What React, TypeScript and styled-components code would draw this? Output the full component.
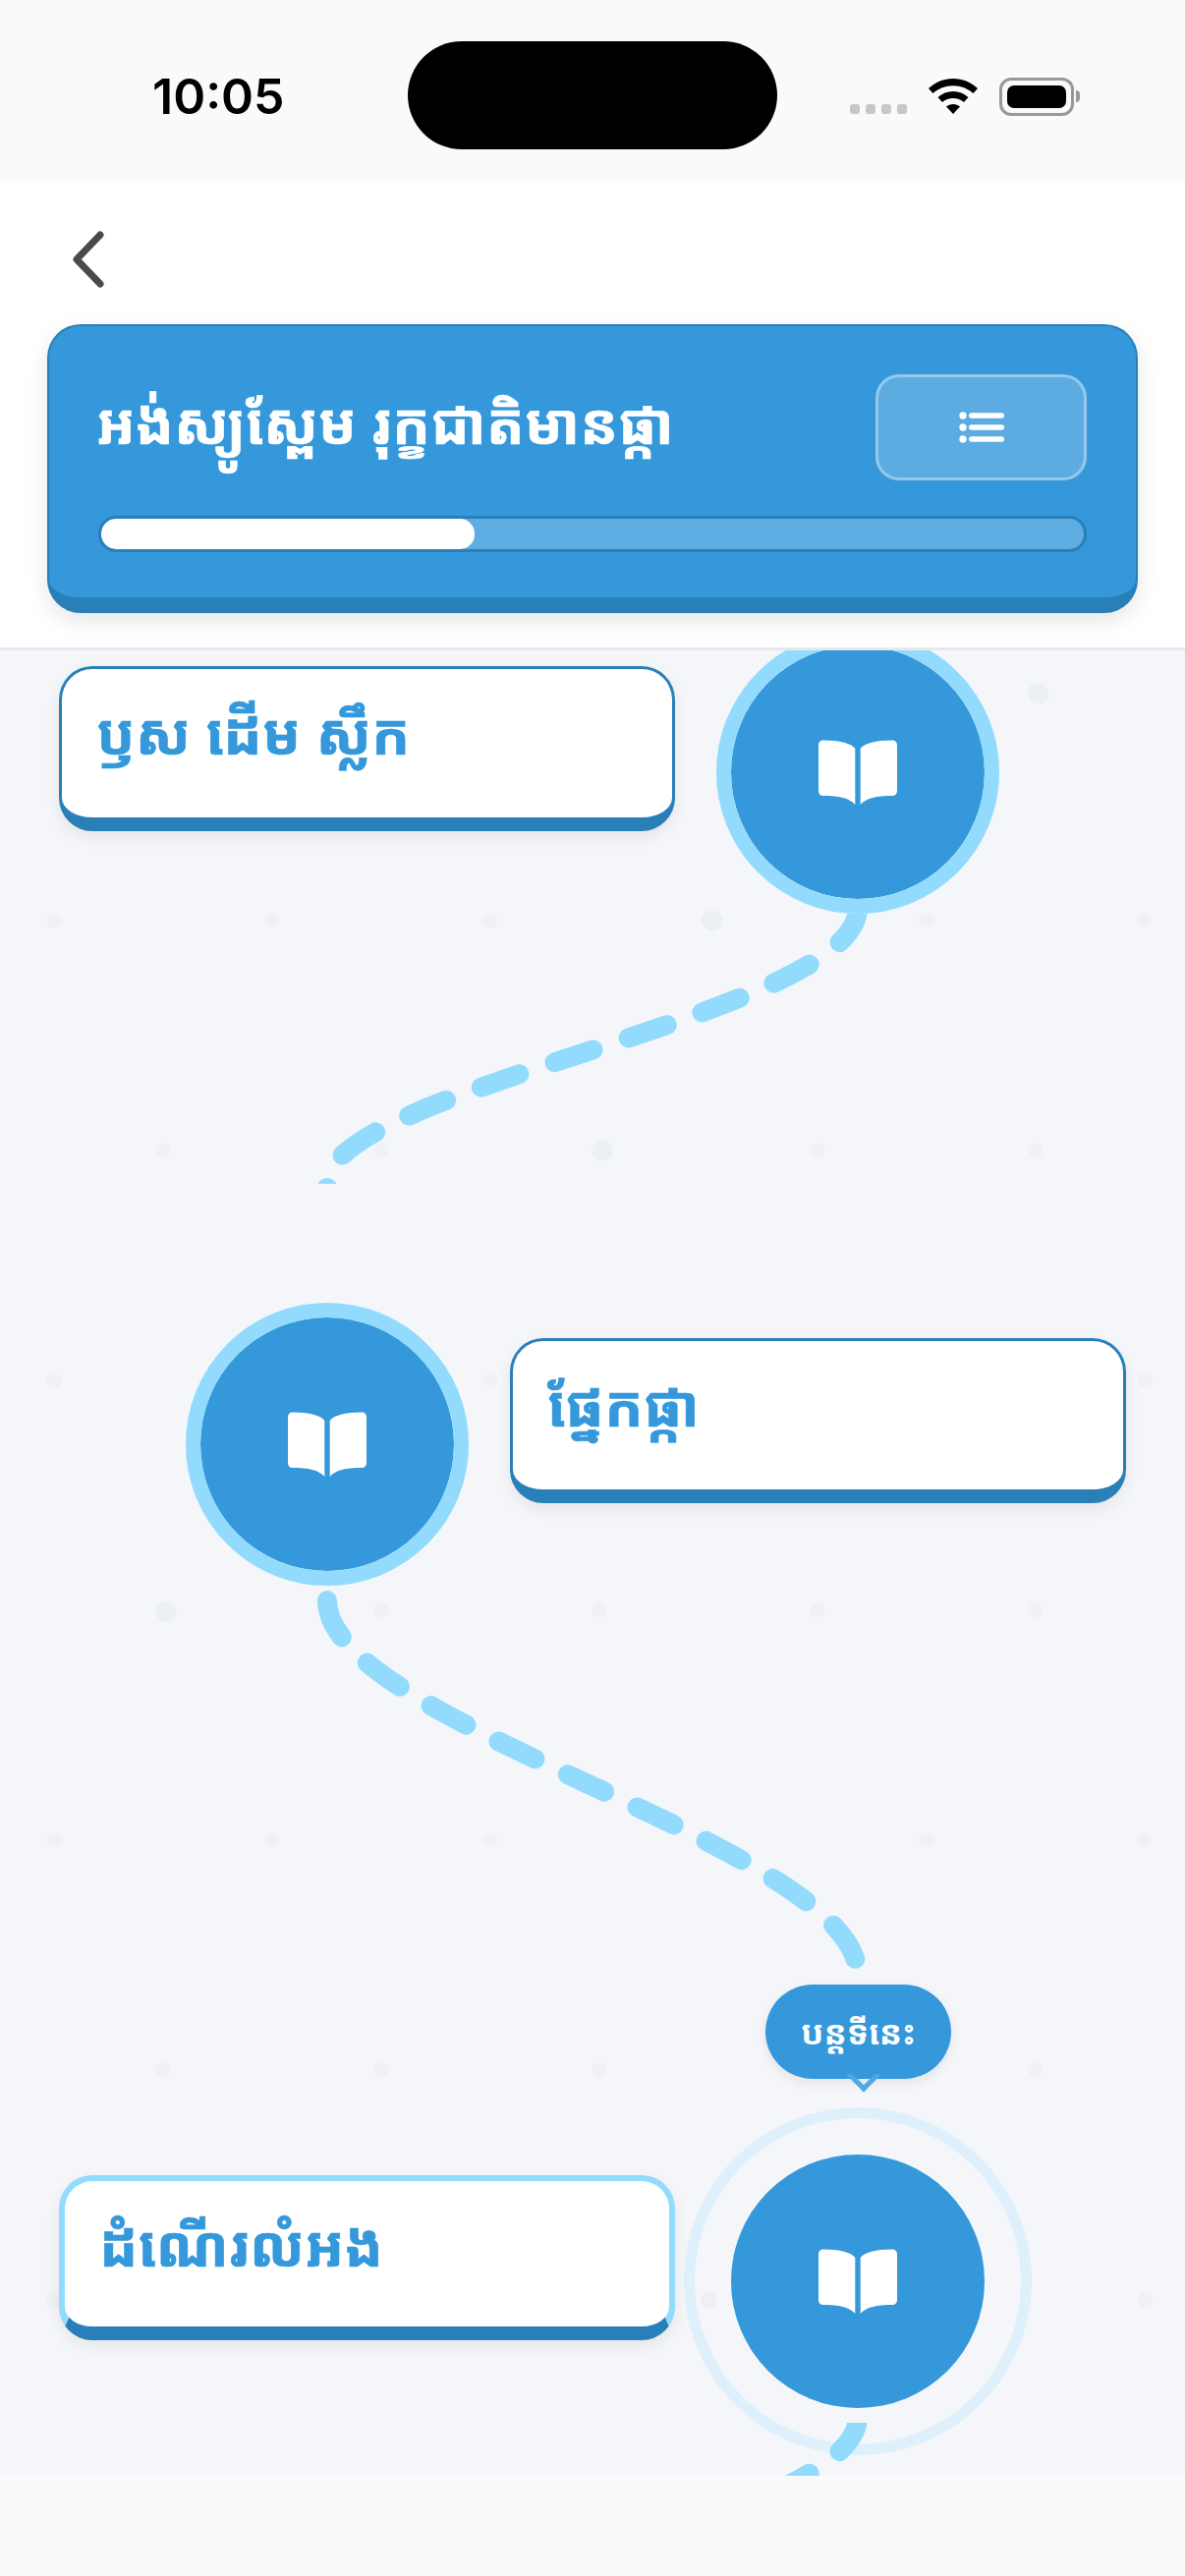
import React from "react";
import styled, { createGlobalStyle } from "styled-components";

const KHMER = `"Noto Sans Khmer", "Khmer OS", "Noto Sans", "DejaVu Sans", sans-serif`;

const GlobalStyle = createGlobalStyle`
  html, body { margin: 0; padding: 0; background: #f9fafc; }
  * { box-sizing: border-box; }
`;

const lessons = [
  { title: "ឫស ដើម ស្លឹក", side: "right" as const },
  { title: "ផ្នែកផ្កា", side: "left" as const },
  { title: "ដំណើរលំអង", side: "right" as const, current: true },
];

const BookIcon = () => (
  <svg width="80" height="66" viewBox="0 0 80 66" fill="#fff">
    <path d="M37.300 9C33 3.500 22 .5 5 .5 2 .5 0 2.500 0 5.500V52c0 3 2 5 5 5 16 0 26 2 32.300 9z" />
    <path d="M42.700 9C47 3.500 58 .5 75 .5c3 0 5 2 5 5V52c0 3-2 5-5 5-16 0-26 2-32.300 9z" />
  </svg>
);

const MenuIcon = () => (
  <svg width="46" height="32" viewBox="0 0 46 32" fill="#fff">
    <circle cx="4" cy="4" r="3.700" />
    <circle cx="4" cy="16" r="3.700" />
    <circle cx="4" cy="28" r="3.700" />
    <rect x="10" y="1.200" width="36" height="5.600" rx="2.800" />
    <rect x="10" y="13.200" width="36" height="5.600" rx="2.800" />
    <rect x="10" y="25.200" width="36" height="5.600" rx="2.800" />
  </svg>
);

export default function App() {
  return (
    <Screen>
      <GlobalStyle />
      <StatusBar>
        <Time>10:05</Time>
        <Island />
        <StatusIcons>
          <Signal>
            <i />
            <i />
            <i />
            <i />
          </Signal>
          <svg width="50" height="36" viewBox="0 0 50 36">
            <path d="M25 0c9.500 0 18 3.600 25 10l-4.500 5C40 10 33 7.200 25 7.200S10 10 4.500 15L0 10C7 3.600 15.500 0 25 0z" />
            <path d="M25 13c6 0 11 2.200 15.500 6L36 24c-3-2.600-7-4-11-4s-8 1.400-11 4l-4.500-5C14 15.200 19 13 25 13z" />
            <path d="M25 26c2.700 0 5 1 7 2.600L25 36l-7-7.400c2-1.600 4.300-2.600 7-2.600z" />
          </svg>
          <Battery>
            <BatteryFill />
          </Battery>
          <BatteryCap />
        </StatusIcons>
      </StatusBar>

      <Header>
        <BackButton>
          <svg width="34" height="60" viewBox="0 0 34 60" fill="none">
            <path d="M29 5 5 30l24 25" stroke="#4a4a4a" strokeWidth="7" strokeLinecap="round" strokeLinejoin="round" />
          </svg>
        </BackButton>
        <UnitCard>
          <UnitTop>
            <UnitTitle>អង់ស្យូស្ពែម រុក្ខជាតិមានផ្កា</UnitTitle>
            <MenuButton>
              <MenuIcon />
            </MenuButton>
          </UnitTop>
          <Progress>
            <ProgressFill style={{ width: "38%" }} />
          </Progress>
        </UnitCard>
      </Header>

      <PathArea>
        <LessonRow $side={lessons[0].side} $top={-20}>
          <LessonLabel $current={false}>{lessons[0].title}</LessonLabel>
          <NodeSlot>
            <Node>
              <BookIcon />
            </Node>
          </NodeSlot>
        </LessonRow>
        <Connector $height={275} $after={121}>
          <svg width="1206" height="275" viewBox="0 0 1206 275">
            <PathLine d="M873 -6C873 103 333 177 333 275V320" strokeDasharray="41 38" />
          </svg>
        </Connector>

        <LessonRow $side={lessons[1].side} $top={0}>
          <NodeSlot>
            <Node>
              <BookIcon />
            </Node>
          </NodeSlot>
          <LessonLabel $current={false}>{lessons[1].title}</LessonLabel>
        </LessonRow>
        <Connector $height={564} $after={0}>
          <svg width="1206" height="420" viewBox="0 0 1206 420">
            <PathLine d="M333 15C333 141 873 266 873 396" strokeDasharray="41 37" />
          </svg>
          <Tooltip>បន្តទីនេះ</Tooltip>
        </Connector>

        <LessonRow $side={lessons[2].side} $top={0}>
          <LessonLabel $current>{lessons[2].title}</LessonLabel>
          <NodeSlot>
            <Ring />
            <Node $current>
              <BookIcon />
            </Node>
          </NodeSlot>
        </LessonRow>
        <Connector $height={60} $after={0}>
          <svg width="1206" height="60" viewBox="0 0 1206 60">
            <PathLine d="M873 -6C873 103 333 177 333 275" strokeDasharray="41 38" />
          </svg>
        </Connector>
      </PathArea>
      <BottomBar />
    </Screen>
  );
}

const Screen = styled.div`
  width: 1206px;
  height: 2622px;
  display: flex;
  flex-direction: column;
  overflow: hidden;
  background: #f9fafc;
`;

const StatusBar = styled.div`
  height: 186px;
  flex: none;
  background: #f9fafc;
  display: grid;
  grid-template-columns: 415px 376px 1fr;
  align-items: start;
`;

const Time = styled.div`
  margin-top: 70px;
  padding-left: 155px;
  font: 600 50px/56px Inter, "Liberation Sans", sans-serif;
  color: #000;
`;

const Island = styled.div`
  margin-top: 42px;
  height: 110px;
  border-radius: 55px;
  background: #000;
`;

const StatusIcons = styled.div`
  margin-top: 78px;
  padding-left: 74px;
  display: flex;
  align-items: center;
  height: 40px;
`;

const Signal = styled.div`
  display: flex;
  gap: 6px;
  margin-right: 22px;
  margin-top: 26px;

  i {
    display: block;
    width: 10px;
    height: 10px;
    border-radius: 3px;
    background: #c6c7c9;
  }
`;

const Battery = styled.div`
  margin-left: 22px;
  width: 76px;
  height: 39px;
  padding: 5px;
  border: 3px solid #98999b;
  border-radius: 12px;
`;

const BatteryFill = styled.div`
  height: 100%;
  border-radius: 7px;
  background: #000;
`;

const BatteryCap = styled.div`
  margin-left: 2px;
  width: 4px;
  height: 12px;
  border-radius: 0 4px 4px 0;
  background: #98999b;
`;

const Header = styled.div`
  position: relative;
  z-index: 2;
  height: 476px;
  flex: none;
  padding: 0 48px;
  background: #fff;
  border-bottom: 3px solid #e6e8ee;
`;

const BackButton = styled.div`
  height: 144px;
  margin-left: 25px;
  padding-top: 48px;
`;

const UnitCard = styled.div`
  height: 294px;
  padding: 49px 50px 0 50px;
  border: 2px solid #2980b9;
  border-bottom-width: 16px;
  border-radius: 34px;
  background: #3498db;
  box-shadow: 0 8px 22px rgba(0, 0, 0, 0.1);
`;

const UnitTop = styled.div`
  display: flex;
  align-items: flex-start;
  justify-content: space-between;
  height: 108px;
`;

const UnitTitle = styled.div`
  margin: 9px 0 0 -2px;
  font: 700 57.500px/80px ${KHMER};
  color: #fff;
  -webkit-text-stroke: 0.6px #fff;
`;

const MenuButton = styled.div`
  width: 215px;
  height: 108px;
  display: flex;
  align-items: center;
  justify-content: center;
  border: 3px solid rgba(255, 255, 255, 0.35);
  border-radius: 24px;
  background: rgba(255, 255, 255, 0.2);
`;

const Progress = styled.div`
  margin-top: 36px;
  height: 37px;
  border: 3px solid #2980b9;
  border-radius: 18px;
  overflow: hidden;
  background: #5dade2;
`;

const ProgressFill = styled.div`
  height: 100%;
  border-radius: 15px;
  background: #fff;
`;

const PathArea = styled.div`
  flex: none;
  height: 1858px;
  overflow: hidden;
  background-color: #f4f6fa;
  background-image:
    radial-gradient(circle at 1057px 44px, #eceff3 10px, transparent 11px),
    radial-gradient(circle at 725px 275px, #eceff3 10px, transparent 11px),
    radial-gradient(circle at 613px 509px, #eceff3 10px, transparent 11px),
    radial-gradient(circle at 169px 978px, #eceff3 10px, transparent 11px),
    radial-gradient(circle at 721px 1679px, #eef0f4 8px, transparent 9px),
    radial-gradient(circle 8px at 55px 275px, #eff1f5 7px, transparent 8px),
    radial-gradient(circle 8px at 166px 41px, #eff1f5 7px, transparent 8px);
  background-size: auto, auto, auto, auto, auto, 222px 468px, 222px 468px;
  background-repeat: no-repeat, no-repeat, no-repeat, no-repeat, no-repeat, repeat, repeat;
`;

const LessonRow = styled.div<{ $side: "left" | "right"; $top: number }>`
  height: 288px;
  margin-top: ${(p) => p.$top}px;
  display: flex;
  align-items: flex-start;
  gap: 42px;
  padding-left: ${(p) => (p.$side === "right" ? 60 : 189)}px;
`;

const NodeSlot = styled.div`
  position: relative;
  flex: none;
  width: 288px;
  height: 288px;
`;

const Node = styled.div<{ $current?: boolean }>`
  position: relative;
  width: 288px;
  height: 288px;
  display: flex;
  align-items: center;
  justify-content: center;
  border-radius: 50%;
  border: 15px solid ${(p) => (p.$current ? "transparent" : "#93dbfc")};
  background: #3498db;
  background-clip: padding-box;
`;

const Ring = styled.div`
  position: absolute;
  inset: -33px;
  border-radius: 50%;
  border: 11px solid #ddf0fb;
`;

const LessonLabel = styled.div<{ $current: boolean }>`
  flex: none;
  width: 627px;
  height: 168px;
  margin-top: 36px;
  padding: 25px 38px 0 35px;
  border-radius: 34px;
  border: ${(p) => (p.$current ? "6px solid #93dbfc" : "3px solid #2980b9")};
  border-bottom: 14px solid #2980b9;
  background: #fff;
  box-shadow: 0 6px 16px rgba(0, 0, 0, 0.07);
  font: 700 58px/80px ${KHMER};
  color: #3498db;
  -webkit-text-stroke: 0.6px #3498db;
`;

const Connector = styled.div<{ $height: number; $after: number }>`
  position: relative;
  height: ${(p) => p.$height}px;
  margin-bottom: ${(p) => p.$after}px;

  svg {
    display: block;
  }
`;

const PathLine = styled.path.attrs({
  fill: "none",
  stroke: "#93dbfc",
  strokeWidth: 20,
  strokeLinecap: "round",
})``;

const Tooltip = styled.div`
  position: absolute;
  left: 779px;
  top: 406px;
  width: 189px;
  height: 96px;
  display: flex;
  align-items: center;
  justify-content: center;
  border-radius: 48px;
  background: #3498db;
  box-shadow: 0 4px 12px rgba(0, 0, 0, 0.08);
  font: 700 34.500px/44px ${KHMER};
  color: #fff;

  &::after {
    content: "";
    position: absolute;
    left: 50%;
    bottom: -8px;
    width: 16px;
    height: 16px;
    margin-left: -8px;
    transform: rotate(45deg);
    border: 5px solid #52a6df;
    border-top-color: transparent;
    border-left-color: transparent;
  }
`;

const BottomBar = styled.div`
  flex: 1;
  background: #f9fafc;
`;
